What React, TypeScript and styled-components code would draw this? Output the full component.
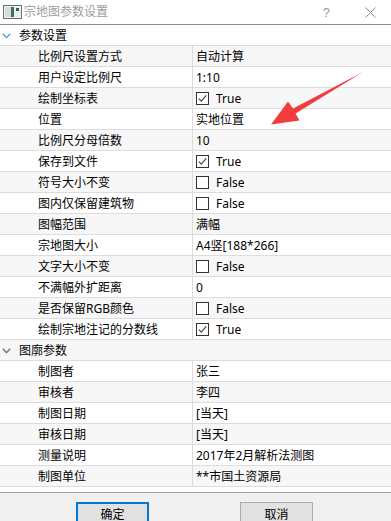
import styled, { createGlobalStyle } from "styled-components";

const GlobalStyle = createGlobalStyle`
    html, body {
        margin: 0;
        padding: 0;
        background: #ffffff;
    }
    body {
        font-family: "Noto Sans", "Noto Sans CJK SC", sans-serif;
        font-size: 12px;
        color: #000;
    }
`

type Prop = {
    name: string;
    value: string;
    check?: boolean;
}

const mainProps: Prop[] = [
    { name: "比例尺设置方式", value: "自动计算" },
    { name: "用户设定比例尺", value: "1:10" },
    { name: "绘制坐标表", value: "True", check: true },
    { name: "位置", value: "实地位置" },
    { name: "比例尺分母倍数", value: "10" },
    { name: "保存到文件", value: "True", check: true },
    { name: "符号大小不变", value: "False", check: false },
    { name: "图内仅保留建筑物", value: "False", check: false },
    { name: "图幅范围", value: "满幅" },
    { name: "宗地图大小", value: "A4竖[188*266]" },
    { name: "文字大小不变", value: "False", check: false },
    { name: "不满幅外扩距离", value: "0" },
    { name: "是否保留RGB颜色", value: "False", check: false },
    { name: "绘制宗地注记的分数线", value: "True", check: true },
];

const frameProps: Prop[] = [
    { name: "制图者", value: "张三" },
    { name: "审核者", value: "李四" },
    { name: "制图日期", value: "[当天]" },
    { name: "审核日期", value: "[当天]" },
    { name: "测量说明", value: "2017年2月解析法测图" },
    { name: "制图单位", value: "**市国土资源局" },
];

const CheckBox = ({ checked }: { checked: boolean }) => (
    <svg width="13" height="13" viewBox="0 0 13 13">
        <rect x="0.5" y="0.5" width="12" height="12" fill="#fff" stroke="#333" />
        {checked && (
            <path d="M2.8 6.6 L5.3 9.2 L10.2 3.4" fill="none" stroke="#444" strokeWidth="1.2" />
        )}
    </svg>
)

const Chevron = ({ color }: { color: string }) => (
    <svg width="9" height="6" viewBox="0 0 9 6">
        <path d="M0.8 0.8 L4.5 4.6 L8.2 0.8" fill="none" stroke={color} strokeWidth="1.3" />
    </svg>
)

const WindowIcon = () => (
    <svg width="19" height="14" viewBox="0 0 19 14">
        <rect x="0.5" y="0.5" width="18" height="13" fill="#f4f4f4" stroke="#6d6d6d" />
        <rect x="2" y="2" width="6" height="10" fill="#d9dcdc" />
        <rect x="8" y="2" width="3" height="10" fill="#3d6e6a" />
        <rect x="11" y="2" width="6" height="10" fill="#e9eef0" />
        <rect x="13" y="3" width="3" height="3" fill="#2f5f5a" />
    </svg>
)

const App = () => {
    let rowIndex = 0;

    function renderRows(list: Prop[]) {
        return list.map((p) => {
            rowIndex++;
            return (
                <PropRow key={p.name} $alt={rowIndex % 2 === 1}>
                    <NameCell>{p.name}</NameCell>
                    <ValueCell>
                        {p.check !== undefined && <CheckBox checked={p.check} />}
                        <ValueText $check={p.check !== undefined}>{p.value}</ValueText>
                    </ValueCell>
                </PropRow>
            )
        })
    }

    const firstGroup = renderRows(mainProps);
    rowIndex++;
    const secondHeaderAlt = rowIndex % 2 === 1;
    const secondGroup = renderRows(frameProps);

    return (
        <Dialog>
            <GlobalStyle />
            <TitleBar>
                <TitleLeft>
                    <WindowIcon />
                    <TitleText>宗地图参数设置</TitleText>
                </TitleLeft>
                <TitleButtons>
                    <HelpGlyph>?</HelpGlyph>
                    <svg width="11" height="11" viewBox="0 0 11 11">
                        <path d="M0.5 0.5 L10.5 10.5 M10.5 0.5 L0.5 10.5" stroke="#8a8a8a" strokeWidth="1" />
                    </svg>
                </TitleButtons>
            </TitleBar>
            <Tree>
                <GroupHeader $alt={false}>
                    <Chevron color="#3d9be0" />
                    <GroupTitle>参数设置</GroupTitle>
                </GroupHeader>
                {firstGroup}
                <GroupHeader $alt={secondHeaderAlt}>
                    <Chevron color="#666" />
                    <GroupTitle>图廓参数</GroupTitle>
                </GroupHeader>
                {secondGroup}
            </Tree>
            <ButtonBar>
                <DialogButton $default>确定</DialogButton>
                <DialogButton>取消</DialogButton>
            </ButtonBar>
            <Arrow width="391" height="521" viewBox="0 0 391 521">
                <polygon
                    points="363,72 293,108.5 288,101.5 271,124.5 299.5,120.5 295.5,113.5"
                    fill="#f23d3d"
                />
            </Arrow>
        </Dialog>
    )
}

const Dialog = styled.div`
    position: relative;
    width: 391px;
    height: 521px;
    overflow: hidden;
    display: flex;
    flex-direction: column;
    background: #fff;
`
const TitleBar = styled.div`
    height: 25px;
    flex-shrink: 0;
    display: flex;
    align-items: center;
    justify-content: space-between;
    border-bottom: 1px solid #8c8c8c;
    box-sizing: border-box;
    padding: 0 15px 0 3px;
`
const TitleLeft = styled.div`
    display: flex;
    align-items: center;
    gap: 2px;
`
const TitleText = styled.span`
    color: #9c9c9c;
    font-size: 12px;
    line-height: 20px;
`
const TitleButtons = styled.div`
    display: flex;
    align-items: center;
    gap: 35px;
`
const HelpGlyph = styled.span`
    color: #9a9a9a;
    font-family: "Liberation Sans", sans-serif;
    font-size: 13px;
`
const Tree = styled.div`
    flex-shrink: 0;
    height: 468px;
    display: flex;
    flex-direction: column;
    border-bottom: 1px solid #a0a0a0;
    box-sizing: border-box;
`
const GroupHeader = styled.div<{ $alt: boolean }>`
    height: 21px;
    flex-shrink: 0;
    box-sizing: border-box;
    border-bottom: 1px solid #dcdcdc;
    background: ${(p) => (p.$alt ? "#f7f7f7" : "#fff")};
    display: flex;
    align-items: center;
    padding: 1px 0 0 2px;
`
const GroupTitle = styled.span`
    margin-left: 8px;
    line-height: 19px;
`
const PropRow = styled.div<{ $alt: boolean }>`
    height: 21px;
    flex-shrink: 0;
    box-sizing: border-box;
    border-bottom: 1px solid #dcdcdc;
    background: ${(p) => (p.$alt ? "#f7f7f7" : "#fff")};
    display: grid;
    grid-template-columns: 193px 1fr;
`
const NameCell = styled.div`
    padding: 2px 0 0 38px;
    border-right: 1px solid #dcdcdc;
    line-height: 18px;
    white-space: nowrap;
`
const ValueCell = styled.div`
    padding: 1px 0 0 3px;
    display: flex;
    align-items: center;
    white-space: nowrap;
`
const ValueText = styled.span<{ $check: boolean }>`
    margin-left: ${(p) => (p.$check ? "7px" : "0")};
    line-height: 18px;
`
const ButtonBar = styled.div`
    flex: 1;
    background: #f0f0f0;
    display: flex;
    align-items: flex-start;
    padding: 9px 0 0 76px;
    gap: 91px;
`
const DialogButton = styled.button<{ $default?: boolean }>`
    width: 73px;
    height: 23px;
    background: #e1e1e1;
    border: ${(p) => (p.$default ? "2px solid #0078d7" : "1px solid #adadad")};
    font-family: "Noto Sans CJK SC", sans-serif;
    font-size: 12px;
    color: #000;
    padding: 0;
`
const Arrow = styled.svg`
    position: absolute;
    left: 0;
    top: 0;
    pointer-events: none;
`

export default App;
